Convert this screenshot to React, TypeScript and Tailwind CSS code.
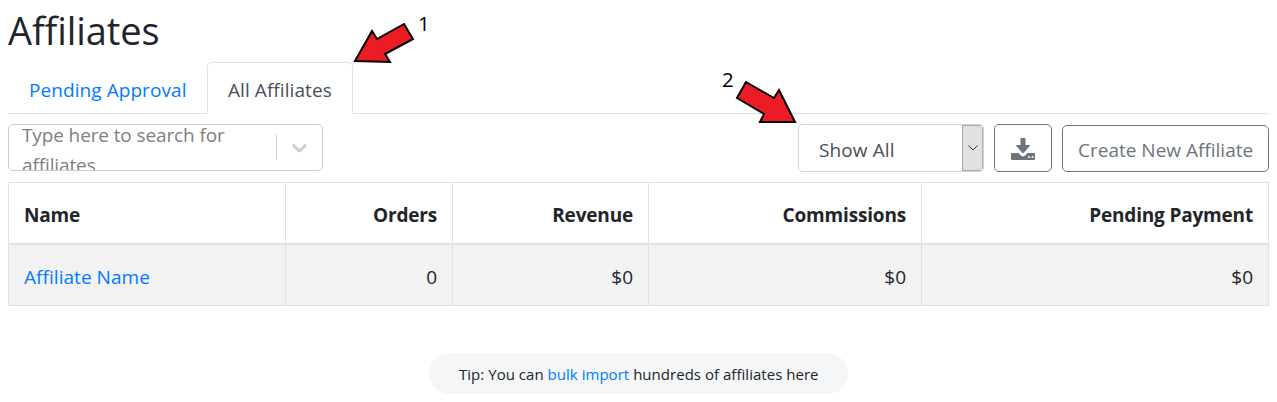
const columns = [
  { label: "Name", value: "Affiliate Name" },
  { label: "Orders", value: "0" },
  { label: "Revenue", value: "$0" },
  { label: "Commissions", value: "$0" },
  { label: "Pending Payment", value: "$0" },
];

function DownloadIcon() {
  return (
    <svg viewBox="0 0 24 22" className="h-[22px] w-6 fill-current">
      <path d="M1 15H7.300L10.300 17.800Q12 19.200 13.700 17.800L16.700 15H23Q24 15 24 16V21Q24 22 23 22H1Q0 22 0 21V16Q0 15 1 15Z" />
      <path d="M10.300 0H13.700Q14.500 0 14.500 .8V7H18.300Q19.500 7 18.700 7.900L12.600 15Q12 15.600 11.400 15L5.300 7.900Q4.500 7 5.700 7H9.500V.8Q9.500 0 10.300 0Z" />
      <circle cx="18" cy="19" r="1" className="fill-white" />
      <circle cx="21.500" cy="19" r="1" className="fill-white" />
    </svg>
  );
}

function Table() {
  return (
    <div className="mt-[10px] grid h-[124px] w-[1261px] grid-cols-[277px_167px_196px_273px_347px] grid-rows-[62px_61px] border-t border-l border-[#dee2e6]">
      {columns.map((c, i) => (
        <div
          key={c.label}
          className={`flex items-center border-r border-b-2 border-[#dee2e6] px-[15px] pt-1 font-bold tracking-[-0.18px] ${i === 0 ? "" : "justify-end"}`}
        >
          <span>{c.label}</span>
        </div>
      ))}
      {columns.map((c, i) => (
        <div
          key={c.label}
          className={`flex items-center border-r border-b border-[#dee2e6] bg-[#f2f2f2] px-[15px] pt-1 ${i === 0 ? "tracking-[0.05px] text-[#007bff]" : "justify-end"}`}
        >
          <span>{c.value}</span>
        </div>
      ))}
    </div>
  );
}

export default function App() {
  return (
    <div className="relative h-[402px] w-[1277px] overflow-hidden bg-white px-2 font-['Open_Sans',sans-serif] text-[19px] leading-[30px] text-[#212529]">
      <h1 className="h-[62px] pt-[6px] text-[38px] leading-[48px] tracking-[-0.1px]"><span>Affiliates</span></h1>
      <nav className="flex h-[52px] w-[1261px] border-b border-[#dee2e6] tracking-[0.07px]">
        <a className="w-[199px] pt-[13px] pl-[21px] text-[#007bff]"><span>Pending Approval</span></a>
        <a className="h-[52px] w-[146px] rounded-t-[5px] border border-b-0 border-[#dee2e6] bg-white pt-[12px] pl-[20px] text-[#495057]"><span>All Affiliates</span></a>
      </nav>
      <div className="mt-[10px] flex h-12 w-[1261px]">
        <div className="flex h-[47px] w-[315px] rounded-[5px] border border-[#ccc]">
          <div className="h-[45px] w-[267px] overflow-hidden pl-[13px] tracking-[-0.12px] text-[#808080]">
            <div className="-mt-[5px] w-[240px]">Type here to search for<br />affiliates</div>
          </div>
          <span className="mt-[10px] h-[25px] w-px bg-[#ccc]" />
          <svg viewBox="0 0 20 20" className="mt-[10px] ml-[10px] size-[25px] fill-[#ccc]">
            <path d="M4.516 7.548c0.436-0.446 1.043-0.481 1.576 0l3.908 3.747 3.908-3.747c0.533-0.481 1.141-0.446 1.574 0 0.436 0.445 0.408 1.197 0 1.615-0.406 0.418-4.695 4.502-4.695 4.502-0.217 0.223-0.502 0.335-0.787 0.335s-0.57-0.112-0.789-0.335c0 0-4.287-4.084-4.695-4.502s-0.436-1.17 0-1.615z" />
          </svg>
        </div>
        <div className="ml-[475px] flex w-[186px] overflow-hidden rounded-[5px] border border-[#ced4da] text-[#495057]">
          <div className="w-[163px] pt-[10px] pl-5 tracking-[0.1px]"><span>Show All</span></div>
          <div className="flex w-[21px] items-center justify-center border border-[#adadad] bg-[#e1e1e1]">
            <svg viewBox="0 0 10 6" className="h-[6px] w-[10px] fill-none stroke-[#333]"><path d="M.5 .5 5 5 9.500 .5" /></svg>
          </div>
        </div>
        <div className="ml-[10px] flex w-[58px] items-center justify-center rounded-[5px] border border-[#6c757d] pt-[2px] text-[#6c757d]">
          <DownloadIcon />
        </div>
        <div className="mt-px ml-[10px] h-[47px] w-[207px] rounded-[5px] border border-[#6c757d] pt-[9px] pl-[15px] whitespace-nowrap text-[#6c757d]"><span>Create New Affiliate</span></div>
      </div>
      <Table />
      <div className="mt-[47px] ml-[421px] h-[41px] w-[419px] rounded-full bg-[#f4f6f8] pt-[7px] pl-[30px] text-[15px] leading-[28px] tracking-[0.03px] whitespace-nowrap">
        <span>Tip: You can <span className="text-[#007bff]">bulk import</span> hundreds of affiliates here</span>
      </div>
      <svg viewBox="0 0 1277 402" className="pointer-events-none absolute inset-0 size-full fill-[#ed1c24] stroke-black stroke-2">
        <path d="M355 61 372 31 377 39 404 24 413 39 385 54 390 62Z" />
        <path d="M795 122 779 90 774 98 746 82 737 98 764 114 760 122Z" />
      </svg>
      <span className="absolute top-[8px] left-[418px] text-[20.5px] text-black">1</span>
      <span className="absolute top-[64px] left-[722px] text-[20.5px] text-black">2</span>
    </div>
  );
}
